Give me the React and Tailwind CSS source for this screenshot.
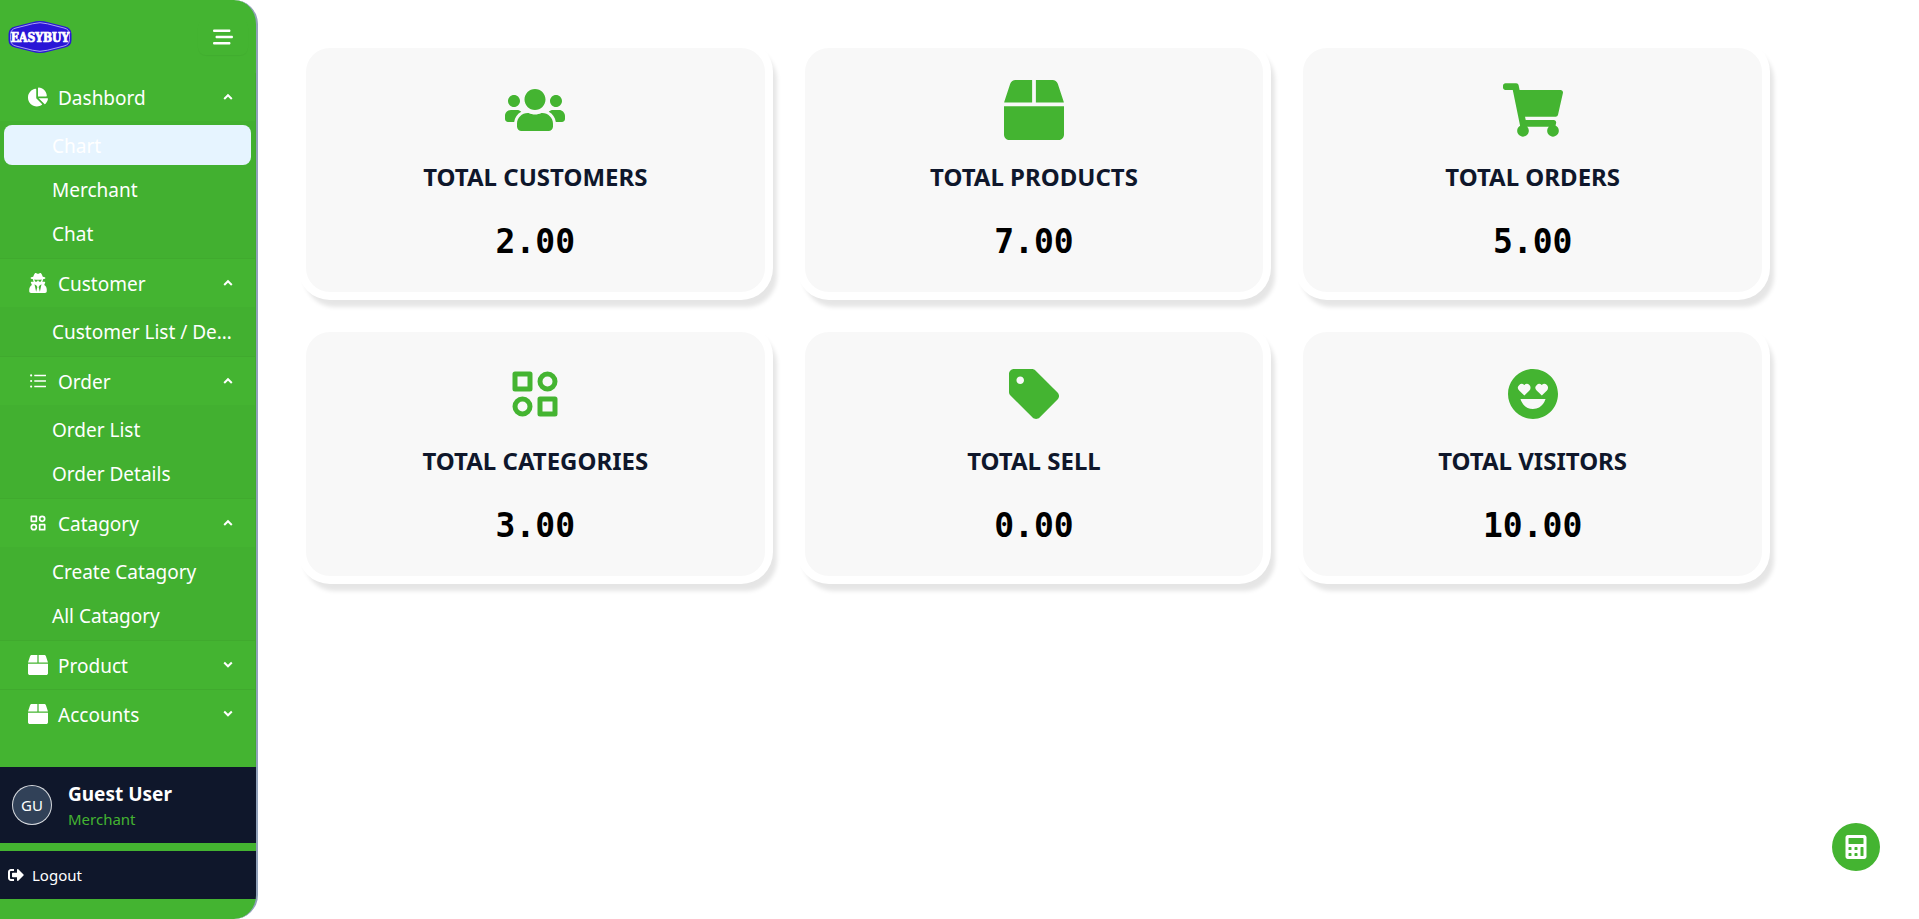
import React, { useState } from "react";
import { FaChartPie, FaUserSecret, FaBox, FaUsers, FaShoppingCart, FaSignOutAlt, FaCalculator } from "react-icons/fa";
import { FaBarsStaggered } from "react-icons/fa6";
import { AiOutlineUnorderedList } from "react-icons/ai";
import { BiSolidHappyHeartEyes } from "react-icons/bi";
import { MdSell } from "react-icons/md";

function CategoryIcon({ size, className }) {
  return (
    <svg width={size} height={size} viewBox="0 0 24 24" fill="none" stroke="currentColor" strokeWidth="2" strokeLinejoin="round" className={className} aria-hidden="true">
      <rect x="4" y="4" width="6" height="6" />
      <circle cx="17" cy="7" r="3" />
      <circle cx="7" cy="17" r="3" />
      <rect x="14" y="14" width="6" height="6" />
    </svg>
  );
}

const menu = [
  { label: "Dashbord", Icon: FaChartPie, open: true, items: ["Chart", "Merchant", "Chat"] },
  { label: "Customer", Icon: FaUserSecret, open: true, items: ["Customer List / Details"] },
  { label: "Order", Icon: AiOutlineUnorderedList, open: true, items: ["Order List", "Order Details"] },
  { label: "Catagory", Icon: CategoryIcon, open: true, items: ["Create Catagory", "All Catagory"] },
  { label: "Product", Icon: FaBox, open: false, items: ["Create Product", "All Product"] },
  { label: "Accounts", Icon: FaBox, open: false, items: ["All Accounts"] },
];

const stats = [
  { label: "TOTAL CUSTOMERS", value: "2.00", Icon: FaUsers },
  { label: "TOTAL PRODUCTS", value: "7.00", Icon: FaBox },
  { label: "TOTAL ORDERS", value: "5.00", Icon: FaShoppingCart },
  { label: "TOTAL CATEGORIES", value: "3.00", Icon: CategoryIcon },
  { label: "TOTAL SELL", value: "0.00", Icon: MdSell },
  { label: "TOTAL VISITORS", value: "10.00", Icon: BiSolidHappyHeartEyes },
];

function Logo() {
  return (
    <svg width="64" height="34" viewBox="0 0 64 34" role="img" aria-label="Easybuy">
      <path d="M7 6.5 24 2.2Q32-.2 40 2.2L57 6.5Q63.500 8 63.500 14V20Q63.500 26 57 27.500L40 31.800Q32 34.200 24 31.800L7 27.500Q.5 26 .5 20V14Q.5 8 7 6.500Z" fill="#2a16d6" />
      <path d="M8 8 24.500 3.800Q32 1.600 39.500 3.800L56 8Q61.500 9.300 61.500 14.500V19.500Q61.500 24.700 56 26L39.500 30.200Q32 32.400 24.500 30.200L8 26Q2.500 24.700 2.500 19.500V14.500Q2.500 9.300 8 8Z" fill="none" stroke="#c9c4f6" strokeWidth="0.800" />
      <text x="32" y="21.500" textAnchor="middle" fontSize="12" fontWeight="700" fill="#fff" stroke="#fff" strokeWidth="0.700" className="font-['DejaVu_Serif_Condensed','DejaVu_Serif',serif]">EASYBUY</text>
    </svg>
  );
}

function Chevron({ open }) {
  return (
    <svg width="10" height="10" viewBox="0 0 10 10" fill="none" stroke="currentColor" strokeWidth="2" aria-hidden="true">
      <path d={open ? "M1.200 7 5 3.200 8.800 7" : "M1.200 2.500 5 6.300 8.800 2.500"} />
    </svg>
  );
}

function MenuGroup({ group, selected, onSelect }) {
  const [open, setOpen] = useState(group.open);
  const { Icon } = group;
  return (
    <li className="border-b border-black/5 last:border-b-0">
      <button type="button" aria-expanded={open} onClick={() => setOpen(!open)} className="flex h-12 w-full items-center pr-[22px] pl-7 text-left">
        <Icon size={20} className="shrink-0" />
        <span className="ml-2.5 flex-1 pt-0.5">{group.label}</span>
        <Chevron open={open} />
      </button>
      {open && (
        <ul className="flex flex-col gap-1 bg-black/2 px-1 pt-1 pb-[5px]">
          {group.items.map((item) => (
            <li key={item}>
              <a
                href="#"
                onClick={(e) => { e.preventDefault(); onSelect(item); }}
                className={`block h-10 truncate rounded-lg pt-0.5 pr-4 pl-12 leading-[38px] ${selected === item ? "bg-[#e6f4ff]" : ""}`}
              >
                {item}
              </a>
            </li>
          ))}
        </ul>
      )}
    </li>
  );
}

function Sidebar() {
  const [selected, setSelected] = useState("Chart");
  return (
    <aside className="flex w-[258px] shrink-0 flex-col overflow-hidden rounded-r-3xl border-r-2 border-slate-400 bg-[#44b431] pb-5 text-white">
      <header className="flex h-[73px] shrink-0 items-center justify-between pr-2 pl-2">
        <Logo />
        <button type="button" aria-label="Toggle menu" className="flex h-9 w-[50px] items-center justify-center rounded-lg shadow-[0_1px_1px_rgba(0,0,0,0.04)]">
          <FaBarsStaggered size={20} />
        </button>
      </header>
      <nav className="flex-1 border-r border-black/5">
        <ul className="text-[19px]">
          {menu.map((group) => (
            <MenuGroup key={group.label} group={group} selected={selected} onSelect={setSelected} />
          ))}
        </ul>
      </nav>
      <div className="flex h-[76px] shrink-0 items-center gap-4 bg-slate-900 px-3">
        <span className="flex size-10 shrink-0 items-center justify-center rounded-full border border-white/80 bg-slate-700 text-[15px]">GU</span>
        <div className="pt-1">
          <p className="text-[19px] leading-6 font-bold">Guest User</p>
          <p className="text-[15px] leading-[26px] text-[#44b431]">Merchant</p>
        </div>
      </div>
      <button type="button" className="mt-2 flex h-12 shrink-0 items-center gap-2 bg-slate-900 px-2 text-[15px]">
        <FaSignOutAlt size={16} />
        Logout
      </button>
    </aside>
  );
}

function StatCard({ label, value, Icon }) {
  return (
    <section className="flex flex-col items-center rounded-3xl bg-[#f8f8f8] px-8 pt-8 pb-[30px] shadow-[0_0_0_8px_#fff,5px_8px_4px_7px_rgba(0,0,0,0.1)]">
      <Icon size={60} className="text-[#44b431]" />
      <h2 className="mt-[21px] text-2xl leading-8 font-bold text-slate-900">{label}</h2>
      <p className="mt-[29px] font-['DejaVu_Sans_Mono',monospace] text-[33px] leading-10 font-bold text-black">{value}</p>
    </section>
  );
}

export default function App() {
  return (
    <div className="flex min-h-screen bg-white font-['Noto_Sans','Open_Sans',sans-serif]">
      <Sidebar />
      <main className="flex-1 p-12">
        <div className="grid max-w-[1456px] grid-cols-3 gap-10">
          {stats.map((s) => (
            <StatCard key={s.label} {...s} />
          ))}
        </div>
      </main>
      <button type="button" aria-label="Calculator" className="fixed right-[39px] bottom-12 flex size-12 items-center justify-center rounded-full bg-[#44b431] text-white">
        <FaCalculator size={24} />
      </button>
    </div>
  );
}
